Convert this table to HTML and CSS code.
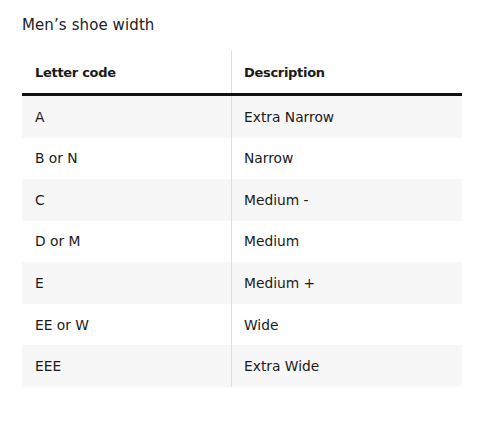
FILE: index.html
```html
<!DOCTYPE html>
<html>
<head>
<meta charset="utf-8">
<link rel="stylesheet" href="styles.css">
</head>
<body>
<div class="wrap">
  <h2 class="title">Men’s shoe width</h2>
  <div class="sizes">
    <div class="row head"><div class="cell">Letter code</div><div class="cell">Description</div></div>
    <div class="row"><div class="cell">A</div><div class="cell">Extra Narrow</div></div>
    <div class="row"><div class="cell">B or N</div><div class="cell">Narrow</div></div>
    <div class="row"><div class="cell">C</div><div class="cell">Medium -</div></div>
    <div class="row"><div class="cell">D or M</div><div class="cell">Medium</div></div>
    <div class="row"><div class="cell">E</div><div class="cell">Medium +</div></div>
    <div class="row"><div class="cell">EE or W</div><div class="cell">Wide</div></div>
    <div class="row"><div class="cell">EEE</div><div class="cell">Extra Wide</div></div>
  </div>
</div>
</body>
</html>
```
FILE: styles.css
```css
html, body {
  margin: 0;
  padding: 0;
  background: #fff;
}
body {
  font-family: "DejaVu Sans", "Liberation Sans", sans-serif;
  color: #1a1a1a;
}
.wrap {
  padding: 15px 0 0 22px;
}
.title {
  margin: 0;
  font-size: 15px;
  font-weight: 400;
  line-height: 20px;
  letter-spacing: 0.1px;
  color: #222;
}
.sizes {
  margin-top: 16px;
  width: 440px;
  display: flex;
  flex-direction: column;
  font-size: 13.8px;
}
.row {
  display: grid;
  grid-template-columns: 210px 1fr;
  height: 41.57px;
  align-items: stretch;
}
.row:nth-child(even) {
  background: #f7f7f7;
}
.row.head {
  height: 45px;
  border-bottom: 3px solid #111;
  box-sizing: border-box;
  font-weight: 700;
  font-size: 13px;
  letter-spacing: -0.3px;
}
.cell {
  display: flex;
  align-items: center;
  padding-left: 13px;
}
.cell:first-child {
  border-right: 1px solid #ddd;
  padding-left: 13px;
}
.cell + .cell {
  padding-left: 12px;
}
```
